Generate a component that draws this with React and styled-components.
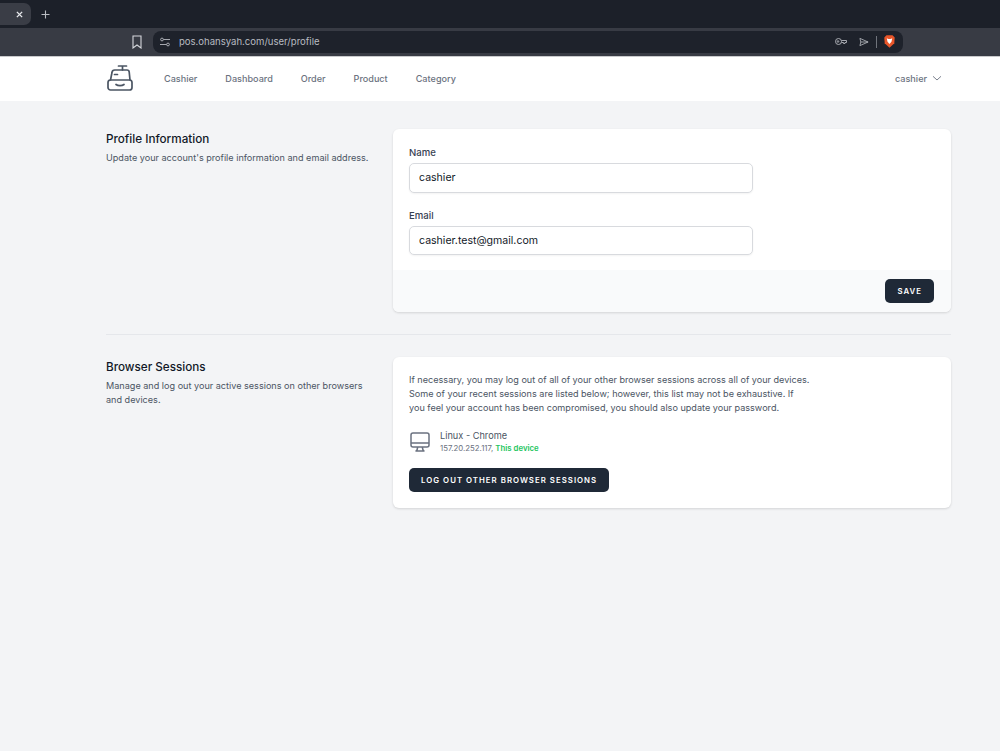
import React from "react";
import styled, { createGlobalStyle } from "styled-components";

const Global = createGlobalStyle`
  html, body { margin: 0; padding: 0; background: #f3f4f6; }
  * { box-sizing: border-box; }
  body { font-family: Inter, "Liberation Sans", sans-serif; }
`;
const Page = styled.div`min-height: 751px; display: flex; flex-direction: column; background: #f3f4f6; overflow: hidden;`;
const TabStrip = styled.div`height: 28px; background: #1c2029; display: flex; align-items: flex-start; padding-top: 3px;`;
const Tab = styled.div`width: 31px; height: 22px; background: #3a3d46; border-radius: 0 7px 7px 0; display: flex; align-items: center; justify-content: flex-end; padding-right: 8px; color: #e8eaed;`;
const NewTab = styled.div`width: 29px; height: 22px; display: flex; align-items: center; justify-content: center; color: #b9bcc2;`;
const Toolbar = styled.div`height: 29px; background: #383b44; display: flex; align-items: center; padding-left: 131px; border-bottom: 1px solid #c9cacc;`;
const Bookmark = styled.div`width: 22px; display: flex; color: #d6d8dc;`;
const Omnibox = styled.div`width: 750px; height: 22px; margin-bottom: 1px; background: #1e222b; border-radius: 8px; display: flex; align-items: center; padding: 0 8px 0 7px; color: #b4b7bd;`;
const Url = styled.span`font-size: 9.55px; color: #b8bbc1; margin-left: 9px; flex: 1;`;
const OmniIcons = styled.div`display: flex; align-items: center; gap: 7px;`;
const SendIcon = styled.svg`width: 10px; height: 10px; margin-left: 5px;`;
const Sep = styled.div`width: 1px; height: 12px; background: #70747c;`;
const Nav = styled.nav`height: 44px; background: #fff; display: flex; align-items: center; padding: 0 58px 2px 107px;`;
const NavLinks = styled.div`display: flex; gap: 28px; margin-left: 31px; flex: 1;`;
const NavLink = styled.a`font-size: 9.1px; color: #6b7280; font-weight: 500;`;
const UserMenu = styled.div`display: flex; align-items: center; gap: 5px; font-size: 9.1px; font-weight: 500; color: #6b7280;`;
const Main = styled.main`padding: 28px 49px 0 106px; display: flex; flex-direction: column;`;
const Section = styled.section`display: grid; grid-template-columns: 287px 558px;`;
const Aside = styled.div`padding-top: 2px;`;
const Title = styled.h3`margin: 0; font-size: 11.7px; line-height: 17px; font-weight: 500; color: #111827;`;
const Desc = styled.p`margin: 3px 0 0; font-size: 9.1px; line-height: 14px; color: #4b5563; max-width: 268px;`;
const Card = styled.div`background: #fff; border-radius: 6px; box-shadow: 0 1px 3px rgba(0,0,0,.09), 0 1px 2px rgba(0,0,0,.05); overflow: hidden;`;
const FormBody = styled.div`padding: 17px 16px 15px; display: flex; flex-direction: column; gap: 16px;`;
const Field = styled.div`display: flex; flex-direction: column; gap: 4px; width: 344px;`;
const Label = styled.label`font-size: 9.6px; line-height: 13px; font-weight: 500; color: #374151;`;
const Input = styled.input`height: 29.5px; border: 1px solid #d8dade; border-radius: 5px; padding: 0 9px; font: 400 10.55px Inter, sans-serif; color: #111827; background: #fff; box-shadow: 0 1px 2px rgba(0,0,0,.05); outline: none;`;
const Footer = styled.div`height: 42px; background: #f9fafb; display: flex; align-items: center; justify-content: flex-end; padding-right: 17px;`;
const Button = styled.button`height: 24px; padding: 0 12px; background: #1f2937; color: #fff; border: 0; border-radius: 5px; font: 600 7.8px Inter, sans-serif; letter-spacing: 1.03px; text-transform: uppercase; white-space: nowrap;`;
const Divider = styled.div`height: 1px; background: #e5e7eb; margin: 22px 0;`;
const SessionBody = styled.div`padding: 16px; display: flex; flex-direction: column; align-items: flex-start;`;
const Para = styled.p`margin: 0; font-size: 9.1px; line-height: 14px; color: #4b5563; width: 401.5px;`;
const Device = styled.div`display: flex; align-items: center; margin: 14px 0 13px; color: #6b7280;`;
const DeviceInfo = styled.div`margin-left: 8px;`;
const DeviceName = styled.div`font-size: 9.2px; line-height: 13px; color: #4b5563;`;
const DeviceMeta = styled.div`font-size: 7.8px; line-height: 13px; color: #6b7280;`;
const ThisDevice = styled.span`color: #22c55e; font-weight: 600;`;
const LogoMark = styled.svg`width: 26px; height: 26px; flex: none;`;
const DesktopMark = styled.svg`width: 24px; height: 24px; margin-left: -1px; flex: none;`;

const Logo = () => (
  <LogoMark viewBox="0 0 26 26" fill="none" stroke="#4b5563" strokeWidth="1.7" strokeLinecap="round" strokeLinejoin="round">
    <path d="M11.500 1h8M15.500 1v4" />
    <path d="M3.500 15 5 7.500A2.800 2.800 0 0 1 7.700 5H20a2.200 2.200 0 0 1 2.200 2L23 15" />
    <path d="M7.500 9.500h3" />
    <rect x="1" y="15" width="24" height="10" rx="2.500" />
    <path d="M9 19.500c2 1.500 6 1.500 8 0" />
  </LogoMark>
);
const Desktop = () => (
  <DesktopMark viewBox="0 0 24 24" fill="none" stroke="currentColor" strokeWidth="1.5" strokeLinecap="round" strokeLinejoin="round">
    <path d="M9.750 17 9 20l-1 1h8l-1-1-.75-3M3 13h18M5 17h14a2 2 0 0 0 2-2V5a2 2 0 0 0-2-2H5a2 2 0 0 0-2 2v10a2 2 0 0 0 2 2Z" />
  </DesktopMark>
);
const Brave = () => (
  <svg width="11" height="13" viewBox="0 0 11 13">
    <path d="M2.500.3h6l2.200 2.200-.4 5.700-4.800 4.500L.7 8.200.3 2.500Z" fill="#e8562a" />
    <path d="M2.800 3.300 4.500 4h2l1.700-.7-.7 3.400-2 2.200-2-2.200Z" fill="#fff" />
  </svg>
);

export default function App() {
  return (
    <Page>
      <Global />
      <TabStrip>
        <Tab>
          <svg width="7" height="7" viewBox="0 0 8 8" stroke="currentColor" strokeWidth="1.6"><path d="M1 1l6 6M7 1 1 7" /></svg>
        </Tab>
        <NewTab>
          <svg width="9" height="9" viewBox="0 0 9 9" stroke="currentColor" strokeWidth="1.1"><path d="M4.500.5v8M.5 4.500h8" /></svg>
        </NewTab>
      </TabStrip>
      <Toolbar>
        <Bookmark>
          <svg width="12" height="14" viewBox="0 0 12 14" fill="none" stroke="currentColor" strokeWidth="1.1"><path d="M2 1h8v12L6 10l-4 3Z" /></svg>
        </Bookmark>
        <Omnibox>
          <svg width="10" height="10" viewBox="0 0 10 10" fill="none" stroke="currentColor" strokeWidth=".9"><circle cx="2" cy="2.500" r="1.400" /><path d="M3.500 2.500H10M0 7.500h6.500" /><circle cx="8" cy="7.500" r="1.400" /></svg>
          <Url>pos.ohansyah.com/user/profile</Url>
          <OmniIcons>
            <svg width="12" height="9" viewBox="0 0 12 9" fill="none" stroke="currentColor" strokeWidth=".9"><circle cx="3.500" cy="4.500" r="3" /><circle cx="3" cy="4.500" r=".8" /><path d="M6.500 3.500h5V5.500H10V6.500H8.500V5.500H6.500" /></svg>
            <SendIcon viewBox="0 0 11 10" fill="none" stroke="currentColor" strokeWidth=".9"><path d="M1 1l9 4-9 4 1-4Zm1 4h8" /></SendIcon>
            <Sep />
            <Brave />
          </OmniIcons>
        </Omnibox>
      </Toolbar>
      <Nav>
        <Logo />
        <NavLinks>
          <NavLink>Cashier</NavLink>
          <NavLink>Dashboard</NavLink>
          <NavLink>Order</NavLink>
          <NavLink>Product</NavLink>
          <NavLink>Category</NavLink>
        </NavLinks>
        <UserMenu>
          cashier
          <svg width="10" height="10" viewBox="0 0 10 10" fill="none" stroke="currentColor" strokeWidth=".9"><path d="M1 3.300 5 7l4-3.700" /></svg>
        </UserMenu>
      </Nav>
      <Main>
        <Section>
          <Aside>
            <Title>Profile Information</Title>
            <Desc>Update your account's profile information and email address.</Desc>
          </Aside>
          <Card>
            <FormBody>
              <Field>
                <Label>Name</Label>
                <Input defaultValue="cashier" />
              </Field>
              <Field>
                <Label>Email</Label>
                <Input defaultValue="cashier.test@gmail.com" />
              </Field>
            </FormBody>
            <Footer><Button>Save</Button></Footer>
          </Card>
        </Section>
        <Divider />
        <Section>
          <Aside>
            <Title>Browser Sessions</Title>
            <Desc>Manage and log out your active sessions on other browsers and devices.</Desc>
          </Aside>
          <Card>
            <SessionBody>
              <Para>If necessary, you may log out of all of your other browser sessions across all of your devices. Some of your recent sessions are listed below; however, this list may not be exhaustive. If you feel your account has been compromised, you should also update your password.</Para>
              <Device>
                <Desktop />
                <DeviceInfo>
                  <DeviceName>Linux - Chrome</DeviceName>
                  <DeviceMeta>157.20.252.117, <ThisDevice>This device</ThisDevice></DeviceMeta>
                </DeviceInfo>
              </Device>
              <Button>Log out other browser sessions</Button>
            </SessionBody>
          </Card>
        </Section>
      </Main>
    </Page>
  );
}
